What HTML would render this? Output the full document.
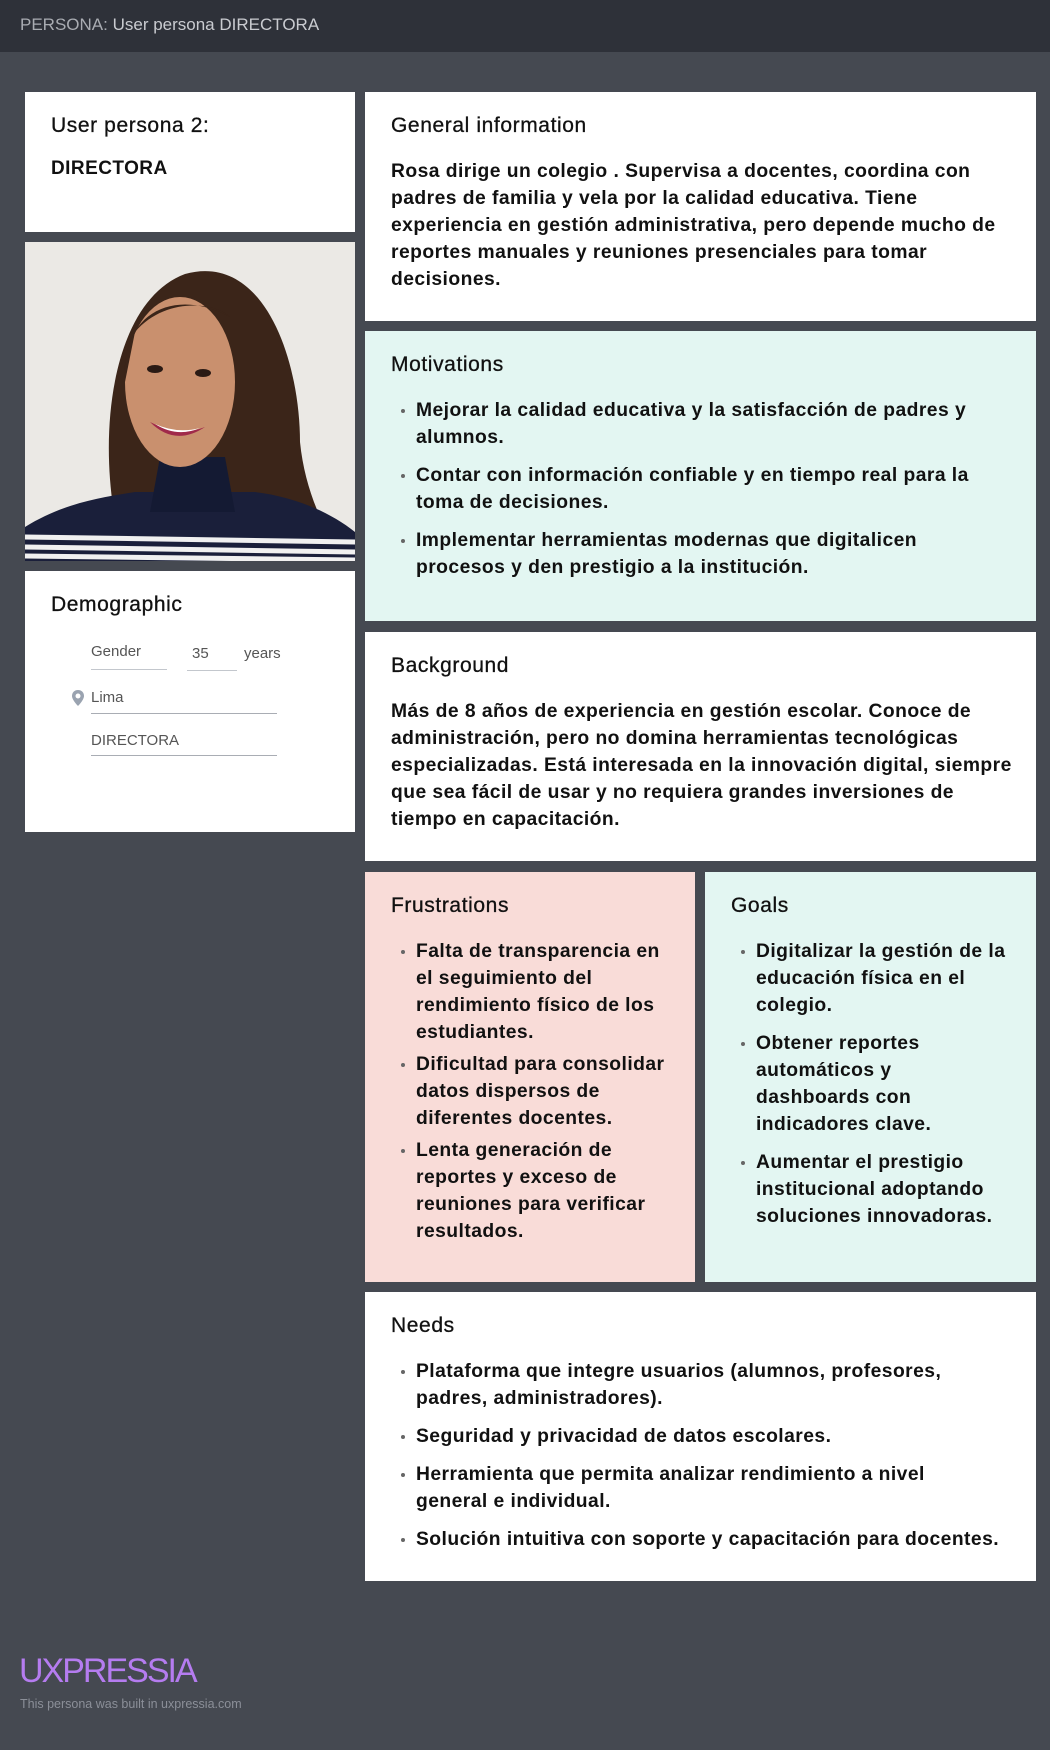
<!DOCTYPE html>
<html><head><meta charset="utf-8">
<style>
*{margin:0;padding:0;box-sizing:border-box}
body{width:1050px;height:1750px;background:#454951;font-family:"Liberation Sans",sans-serif;position:relative;overflow:hidden;color:#111}
.hdr{position:absolute;left:0;top:0;width:1050px;height:52px;background:#2e3139}
.hdr span{position:absolute;left:20px;top:15px;font-size:17px;color:#c9cbd0;white-space:nowrap}
.hdr b{font-weight:normal;color:#a9acb2}
.c{position:absolute;background:#fff;padding:21px 26px}
.mint{background:#e3f6f2}.pink{background:#f9dcd8}
h2{font-size:21px;font-weight:normal;line-height:26px;margin-bottom:19px;color:#111;letter-spacing:0.6px;-webkit-text-stroke:0.3px #111}
p,li{font-size:19.3px;font-weight:bold;line-height:27px;white-space:nowrap;letter-spacing:0.45px}
ul{list-style:none}
li{position:relative;padding-left:25px;margin-bottom:11px}
li:before{content:"";position:absolute;left:10px;top:12px;width:4px;height:4px;border-radius:50%;background:#666}
.tight li{margin-bottom:5px}
.dl{position:absolute;font-size:15px;color:#555;white-space:nowrap}
.ln{position:absolute;height:1px;background:#a9adb4}
</style></head><body>
<div class="hdr"><span><b>PERSONA:</b> User persona DIRECTORA</span></div>

<div class="c" style="left:25px;top:92px;width:330px;height:140px">
<h2 style="margin-bottom:16px">User persona 2:</h2>
<p style="font-size:19px">DIRECTORA</p>
</div>

<div style="position:absolute;left:25px;top:242px;width:330px;height:319px;overflow:hidden">
<svg width="330" height="319" viewBox="0 0 330 319">
<rect width="330" height="319" fill="#ebe9e5"/>
<path d="M95 300 C70 200 85 60 160 32 C240 10 275 120 275 200 C280 250 300 290 320 319 L60 319 Z" fill="#3b2519"/>
<path d="M0 285 C40 260 80 255 110 250 L230 250 C270 255 305 270 330 290 L330 319 L0 319 Z" fill="#1a1f3a"/>
<path d="M0 295 L330 300 M0 305 L330 310 M0 314 L330 318" stroke="#f0f0f0" stroke-width="5"/>
<path d="M135 215 L200 215 L210 270 L125 270 Z" fill="#141a33"/>
<ellipse cx="155" cy="140" rx="55" ry="85" fill="#c9906e"/>
<path d="M100 140 C95 70 150 45 205 75 C190 60 140 55 110 90 Z" fill="#3b2519"/>
<ellipse cx="130" cy="127" rx="8" ry="4" fill="#2a1a14"/>
<ellipse cx="178" cy="131" rx="8" ry="4" fill="#2a1a14"/>
<path d="M125 180 Q150 205 180 185 Q155 195 125 180 Z" fill="#a02a4a"/>
<path d="M130 182 Q152 192 175 186 Q152 196 130 182 Z" fill="#fff"/>
</svg>
</div>

<div class="c" style="left:25px;top:571px;width:330px;height:261px">
<h2>Demographic</h2>
</div>
<span class="dl" style="left:91px;top:643px">Gender</span>
<div class="ln" style="left:91px;top:669px;width:76px;background:#c3c7cd"></div>
<span class="dl" style="left:192px;top:645px">35</span>
<div class="ln" style="left:187px;top:670px;width:50px;background:#c3c7cd"></div>
<span class="dl" style="left:244px;top:645px">years</span>
<svg style="position:absolute;left:71px;top:689px" width="14" height="18" viewBox="0 0 14 18"><path d="M7 1 C3 1 1 4 1 7 C1 11 7 17 7 17 C7 17 13 11 13 7 C13 4 11 1 7 1 Z" fill="#9aa3b0"/><circle cx="7" cy="7" r="2.5" fill="#fff"/></svg>
<span class="dl" style="left:91px;top:689px">Lima</span>
<div class="ln" style="left:91px;top:713px;width:186px"></div>
<span class="dl" style="left:91px;top:732px">DIRECTORA</span>
<div class="ln" style="left:91px;top:755px;width:186px"></div>

<div class="c" style="left:365px;top:92px;width:671px;height:229px">
<h2>General information</h2>
<p>Rosa dirige un colegio . Supervisa a docentes, coordina con<br>padres de familia y vela por la calidad educativa. Tiene<br>experiencia en gestión administrativa, pero depende mucho de<br>reportes manuales y reuniones presenciales para tomar<br>decisiones.</p>
</div>

<div class="c mint" style="left:365px;top:331px;width:671px;height:290px">
<h2>Motivations</h2>
<ul>
<li>Mejorar la calidad educativa y la satisfacción de padres y<br>alumnos.</li>
<li>Contar con información confiable y en tiempo real para la<br>toma de decisiones.</li>
<li>Implementar herramientas modernas que digitalicen<br>procesos y den prestigio a la institución.</li>
</ul>
</div>

<div class="c" style="left:365px;top:632px;width:671px;height:229px">
<h2>Background</h2>
<p>Más de 8 años de experiencia en gestión escolar. Conoce de<br>administración, pero no domina herramientas tecnológicas<br>especializadas. Está interesada en la innovación digital, siempre<br>que sea fácil de usar y no requiera grandes inversiones de<br>tiempo en capacitación.</p>
</div>

<div class="c pink tight" style="left:365px;top:872px;width:330px;height:410px">
<h2>Frustrations</h2>
<ul>
<li>Falta de transparencia en<br>el seguimiento del<br>rendimiento físico de los<br>estudiantes.</li>
<li>Dificultad para consolidar<br>datos dispersos de<br>diferentes docentes.</li>
<li>Lenta generación de<br>reportes y exceso de<br>reuniones para verificar<br>resultados.</li>
</ul>
</div>

<div class="c mint" style="left:705px;top:872px;width:331px;height:410px">
<h2>Goals</h2>
<ul>
<li>Digitalizar la gestión de la<br>educación física en el<br>colegio.</li>
<li>Obtener reportes<br>automáticos y<br>dashboards con<br>indicadores clave.</li>
<li>Aumentar el prestigio<br>institucional adoptando<br>soluciones innovadoras.</li>
</ul>
</div>

<div class="c" style="left:365px;top:1292px;width:671px;height:289px">
<h2>Needs</h2>
<ul>
<li>Plataforma que integre usuarios (alumnos, profesores,<br>padres, administradores).</li>
<li>Seguridad y privacidad de datos escolares.</li>
<li>Herramienta que permita analizar rendimiento a nivel<br>general e individual.</li>
<li>Solución intuitiva con soporte y capacitación para docentes.</li>
</ul>
</div>

<div style="position:absolute;left:19px;top:1652px;font-size:34px;color:#b57cf0;letter-spacing:-2px;white-space:nowrap">UXPRESSIA</div>
<div style="position:absolute;left:20px;top:1697px;font-size:12.5px;color:#8b8f98;white-space:nowrap">This persona was built in uxpressia.com</div>
</body></html>
